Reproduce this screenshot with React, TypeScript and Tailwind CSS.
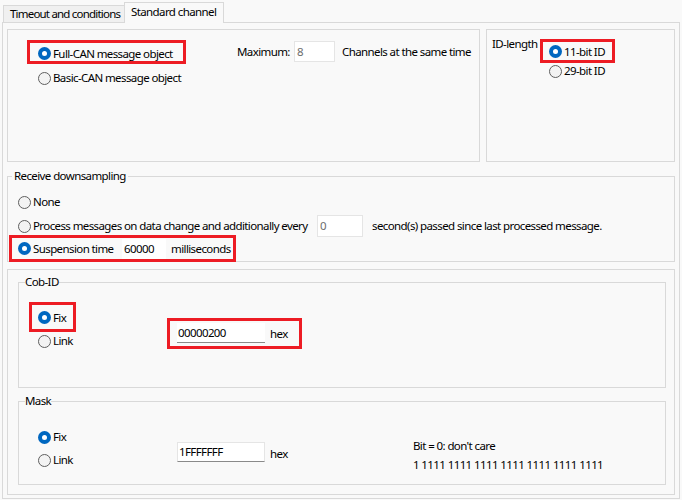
import React from "react";

function Radio({ checked = false }: { checked?: boolean }) {
  if (checked) {
    return (
      <span className="grid size-[13px] shrink-0 place-items-center rounded-full bg-[#0067c0]">
        <span className="size-[5px] rounded-full bg-white" />
      </span>
    );
  }
  return <span className="size-[13px] shrink-0 rounded-full border border-[#5f5f5f] bg-[#f3f3f3]" />;
}

function Option({ checked, label, className = "" }: { checked?: boolean; label: string; className?: string }) {
  return (
    <div className={`flex h-[16px] items-center gap-[2px] ${className}`}>
      <Radio checked={checked} />
      <span className="whitespace-nowrap">{label}</span>
    </div>
  );
}

export default function App() {
  return (
    <div className="h-[500px] w-[682px] overflow-hidden bg-[#f9f9f9] font-['Noto_Sans',sans-serif] text-[11.5px] leading-[16px] tracking-[-0.6px] text-black">
      {/* tabs */}
      <div className="flex h-[22px] items-end pl-[3px]">
        <div className="flex h-[17px] w-[122px] items-center whitespace-nowrap border border-b-0 border-[#d9d9d9] bg-[#f0f0f0] pl-[6px] tracking-[-0.8px]">
          Timeout and conditions
        </div>
        <div className="relative z-10 -mb-px -ml-px flex h-[21px] w-[100px] items-start whitespace-nowrap border border-b-0 border-[#d9d9d9] bg-[#f9f9f9] pl-[6px] pt-[1px]">
          Standard channel
        </div>
      </div>

      <div className="ml-[2px] h-[477px] w-[678px] border border-[#d9d9d9] px-[4px] pt-[6px]">
        <div className="flex h-[133px] gap-[6px]">
          <div className="flex w-[473px] items-start border border-[#d9d9d9]">
            <div className="ml-[19px] mt-[10px] flex flex-col">
              <div className="flex h-[24px] w-[159px] items-center border-[3px] border-[#ed1c24] pl-[8px] pt-[3px]">
                <Option checked label="Full-CAN message object" />
              </div>
              <Option label="Basic-CAN message object" className="mt-[6px] pl-[11px]" />
            </div>
            <div className="ml-[51px] mt-[11px] flex h-[21px] items-center">
              <span className="w-[57px] whitespace-nowrap">Maximum:</span>
              <div className="flex h-[21px] w-[41px] items-center border border-[#e5e5e5] bg-white pl-[2px] text-[#6d6d6d]">8</div>
              <span className="ml-[7px] whitespace-nowrap">Channels at the same time</span>
            </div>
          </div>
          <div className="flex flex-1 items-start border border-[#d9d9d9]">
            <span className="ml-[5px] mt-[6px] w-[48px] whitespace-nowrap">ID-length</span>
            <div className="mt-[9px] flex flex-col">
              <div className="flex h-[24px] w-[75px] items-center border-[3px] border-[#ed1c24] pl-[6px] pt-[1px]">
                <Option checked label="11-bit ID" />
              </div>
              <Option label="29-bit ID" className="pl-[9px]" />
            </div>
          </div>
        </div>

        <fieldset className="mt-[6px] h-[94px] border border-[#d9d9d9] pl-[1px]">
          <legend className="ml-[3px] px-[2px]">Receive downsampling</legend>
          <Option label="None" className="ml-[9px] mt-[10px]" />
          <div className="ml-[9px] mt-[5px] flex h-[22px] items-center">
            <Radio />
            <span className="ml-[2px] w-[284px] whitespace-nowrap">Process messages on data change and additionally every</span>
            <div className="flex h-[22px] w-[46px] items-center border border-[#e5e5e5] bg-white pl-[2px] text-[#6d6d6d]">0</div>
            <span className="ml-[9px] whitespace-nowrap">second(s) passed since last processed message.</span>
          </div>
          <div className="relative -mt-[2px] flex h-[27px] w-[227px] items-center border-[3px] border-[#ed1c24] pl-[6px]">
            <Radio checked />
            <span className="ml-[2px] w-[89px] whitespace-nowrap">Suspension time</span>
            <div className="flex h-[20px] w-[44px] items-center bg-white pl-[2px]">60000</div>
            <span className="ml-[5px]">milliseconds</span>
          </div>
        </fieldset>

        <div className="mt-[7px] h-[226px] border border-[#d9d9d9] pl-[10px] pr-[8px] pt-[4px]">
          <fieldset className="h-[114px] border border-[#d9d9d9]">
            <legend className="ml-[6px]">Cob-ID</legend>
            <div className="flex items-start">
              <div className="ml-[10px] mt-[12px] flex w-[138px] flex-col">
                <div className="flex h-[30px] w-[47px] items-center border-[3px] border-[#ed1c24] pl-[6px] pt-[1px]">
                  <Option checked label="Fix" />
                </div>
                <Option label="Link" className="mt-[1px] pl-[9px]" />
              </div>
              <div className="mt-[28px] flex h-[31px] w-[135px] items-start border-[3px] border-[#ed1c24] pl-[7px] pt-[2px]">
                <div className="flex h-[20px] w-[88px] items-center border-b border-[#8a8a8a] bg-white pl-[1px]">00000200</div>
                <span className="ml-[5px] mt-[3px]">hex</span>
              </div>
            </div>
          </fieldset>

          <fieldset className="mt-[5px] h-[92px] border border-[#d9d9d9]">
            <legend className="ml-[6px]">Mask</legend>
            <div className="flex items-start">
              <div className="ml-[19px] mt-[20px] flex w-[139px] flex-col gap-[7px]">
                <Option checked label="Fix" />
                <Option label="Link" />
              </div>
              <div className="mt-[33px] flex w-[236px] items-start">
                <div className="flex h-[20px] w-[88px] items-center border border-[#e5e5e5] border-b-[#8a8a8a] bg-white pl-[1px]">1FFFFFFF</div>
                <span className="ml-[5px] mt-[4px]">hex</span>
              </div>
              <div className="mt-[27px] flex flex-col leading-[19px]">
                <span className="whitespace-nowrap">Bit = 0: don't care</span>
                <span className="whitespace-nowrap">1 1111 1111 1111 1111 1111 1111 1111</span>
              </div>
            </div>
          </fieldset>
        </div>
      </div>
    </div>
  );
}
